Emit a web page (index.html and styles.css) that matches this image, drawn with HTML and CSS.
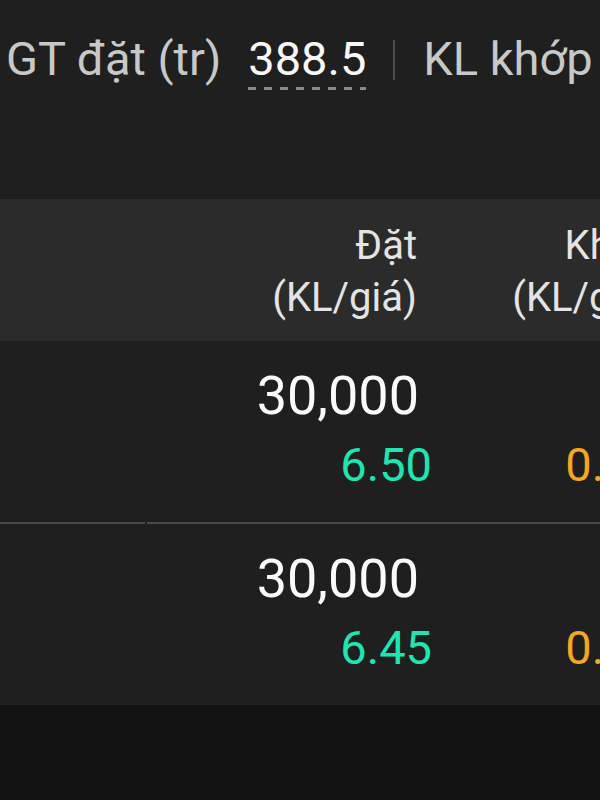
FILE: index.html
```html
<!DOCTYPE html>
<html lang="vi">
<head>
    <meta charset="UTF-8">
    <meta name="viewport" content="width=device-width, initial-scale=1.0">
    <title>Lệnh đặt</title>
    <link rel="stylesheet" href="styles.css">
</head>
<body>
    <div class="summary">
        <span class="summary-label">GT đặt (tr)</span>
        <span class="summary-value">388.5</span>
        <span class="summary-sep"></span>
        <span class="summary-label">KL khớp</span>
    </div>

    <div class="orders">
        <div class="row head">
            <div class="cell first"></div>
            <div class="cell">
                <div class="head-line">Đặt</div>
                <div class="head-line">(KL/giá)</div>
            </div>
            <div class="cell">
                <div class="head-line">Khớp</div>
                <div class="head-line">(KL/giá)</div>
            </div>
        </div>

        <div class="row item">
            <div class="cell first"></div>
            <div class="cell">
                <div class="volume">30,000</div>
                <div class="price up shift">6.50</div>
            </div>
            <div class="cell">
                <div class="volume">&nbsp;</div>
                <div class="price ref">0.00</div>
            </div>
        </div>

        <div class="row item">
            <div class="cell first"></div>
            <div class="cell">
                <div class="volume">30,000</div>
                <div class="price up shift">6.45</div>
            </div>
            <div class="cell">
                <div class="volume">&nbsp;</div>
                <div class="price ref">0.00</div>
            </div>
        </div>
    </div>
</body>
</html>
```

FILE: styles.css
```css
html, body {
    margin: 0;
    height: 100%;
}
body {
    font-family: Roboto, 'Noto Sans', Arial, sans-serif;
    background: #121212;
    overflow: hidden;
    white-space: nowrap;
}
.summary {
    background: #1f1f1f;
    height: 199px;
    box-sizing: border-box;
    padding: 31px 0 0 6px;
    display: flex;
    align-items: flex-start;
    font-size: 47px;
    line-height: 55px;
}
.summary-label {
    color: #c8c8c8;
}
.summary-value {
    color: #f7f7f7;
    margin-left: 27px;
    padding-bottom: 2px;
    height: 57px;
    background-image: linear-gradient(to right, #8a8a8a 8px, transparent 8px);
    background-size: 16px 3px;
    background-repeat: repeat-x;
    background-position: 0 bottom;
}
.summary-sep {
    width: 2px;
    height: 40px;
    margin: 9px 28px 0 27px;
    background: #4d4d4d;
}
.orders {
    width: 680px;
}
.row {
    display: grid;
    grid-template-columns: 147px 270px 240px;
}
.cell {
    text-align: right;
}
.head {
    background: #2b2b2b;
    padding: 21px 0 17px;
}
.head-line {
    font-size: 40px;
    line-height: 52px;
    color: #e4e4e4;
}
.item {
    background: #1f1f1f;
}
.item .cell {
    padding: 25px 0 32px;
    border-bottom: 2px solid #484848;
}
.item .cell.first {
    margin-right: 2px;
}
.item:last-child .cell {
    border-bottom: none;
}
.volume {
    font-size: 54px;
    line-height: 60px;
    color: #fafafa;
    margin-right: -2px;
}
.price {
    font-size: 47px;
    line-height: 50px;
    margin-top: 14px;
}
.price.shift {
    margin-right: -15px;
}
.up {
    color: #1fe5b3;
}
.ref {
    color: #f5a623;
}
```
